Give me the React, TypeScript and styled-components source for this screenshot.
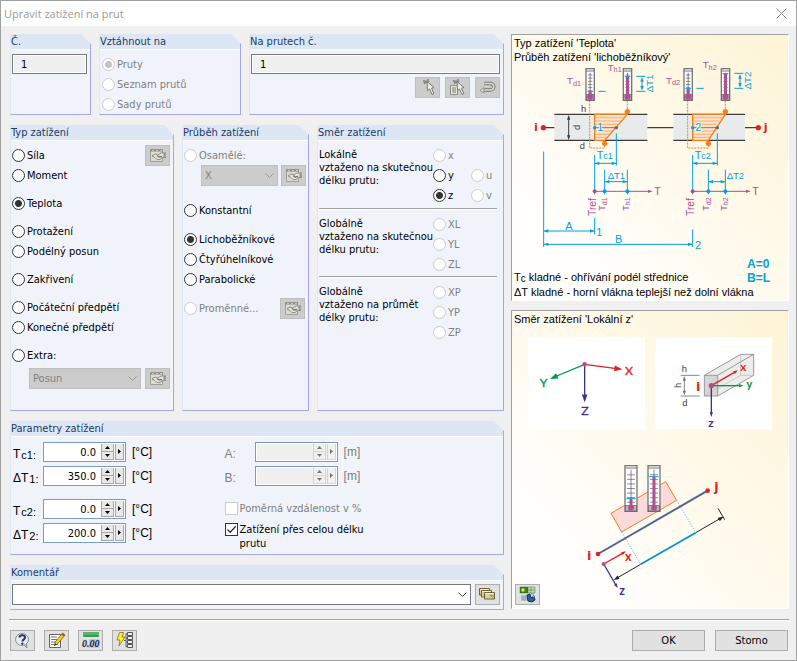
import React, { useId } from "react";
import styled, { createGlobalStyle } from "styled-components";

const UI = `"DejaVu Sans Condensed", "DejaVu Sans", sans-serif`;
const ARIAL = `"Liberation Sans", Arial, sans-serif`;
const BLUE = "#00a0e0";
const PURPLE = "#b0508f";
const ORANGE = "#f08020";
const DARK = "#3c3c3c";
const RED = "#e31e24";
const NAVY = "#3b3488";
const GREEN = "#009a4b";

const GlobalStyle = createGlobalStyle`
  *, *::before, *::after { box-sizing: border-box; }
  body { margin: 0; background: #f0f0f0; font: 11px/13px ${UI}; color: #000; }
  button, input, select { font: inherit; color: inherit; margin: 0; padding: 0; border-radius: 0; }
`;

const Dialog = styled.main`
  display: flex;
  flex-direction: column;
  min-height: 100vh;
  border: 1px solid #a0a0a0;
  background: #f0f0f0;
`;
const TitleBar = styled.header`
  display: flex;
  align-items: center;
  justify-content: space-between;
  height: 25px;
  padding: 0 9px 0 3px;
  background: #fff;
`;
const Title = styled.h1`
  margin: 0;
  font: 11px/16px "Open Sans", sans-serif;
  color: #999;
`;
const CloseButton = styled.button`
  display: flex;
  border: 0;
  background: none;
`;
const Content = styled.div`
  display: grid;
  grid-template-columns: 494fr 278fr;
  gap: 7px;
  padding: 8px 7px 9px 9px;
`;
const Form = styled.form`
  display: flex;
  flex-direction: column;
  gap: 10px;
  min-width: 0;
`;
const GroupRow = styled.div<{ $cols: string }>`
  display: grid;
  grid-template-columns: ${(p) => p.$cols};
  gap: 8px;
`;
const GroupBox = styled.fieldset`
  display: flex;
  flex-direction: column;
  min-width: 0;
  margin: 0;
  padding: 0;
  border: solid #a6a6ea;
  border-width: 0 1px 1px 0;
  background: #f0f4fa;
  clip-path: polygon(0 0, calc(100% - 10px) 0, 100% 10px, 100% 100%, 0 100%);
  border-left: 1px solid #e0e8f8;
`;
const GroupTitle = styled.legend`
  float: left;
  width: 100%;
  height: 16px;
  padding: 0;
  border-bottom: 1px solid #fff;
  background: #dce6f4;
  color: #1c3c64;
  line-height: 16px;
`;
const GroupBody = styled.div<{ $pad: string }>`
  clear: both;
  padding: ${(p) => p.$pad};
`;
const TextField = styled.input`
  display: block;
  width: 100%;
  height: 20px;
  padding: 0 8px;
  border: 1px solid #7a7a7a;
  outline: 1px solid #fff;
  outline-offset: -2px;
  background: #f0f0f0;
`;
const OptionLabel = styled.label<{ $off?: boolean }>`
  display: flex;
  align-items: center;
  gap: 2px;
  height: 20px;
  white-space: nowrap;
  color: ${(p) => (p.$off ? "#808080" : "#000")};
`;
const RadioInput = styled.input`
  appearance: none;
  flex: none;
  width: 13px;
  height: 13px;
  border: 1px solid #333;
  border-radius: 50%;
  background: #fff;
  &:checked { background: radial-gradient(circle, #333 0 3px, #fff 4px); }
  &:disabled { border-color: #ccc; }
  &:disabled:checked { background: radial-gradient(circle, #c4c4c4 0 3px, #fff 4px); }
`;
const CheckInput = styled.input`
  appearance: none;
  flex: none;
  width: 13px;
  height: 13px;
  border: 1px solid #333;
  background: #fff;
  &:checked { background: #fff url('data:image/svg+xml,<svg xmlns="http://www.w3.org/2000/svg" viewBox="0 0 11 11"><path d="M1.5 5.5 4.2 8.2 9.7 2.2" fill="none" stroke="%23333" stroke-width="1.3"/></svg>'); }
  &:disabled { border-color: #ccc; }
`;
const CheckLabel = styled.label<{ $off?: boolean }>`
  display: flex;
  align-items: flex-start;
  gap: 2px;
  max-width: 150px;
  line-height: 14px;
  color: ${(p) => (p.$off ? "#808080" : "#000")};
`;
const Stack = styled.div<{ $gap?: number }>`
  display: flex;
  flex-direction: column;
  gap: ${(p) => p.$gap ?? 0}px;
`;
const Split = styled.div`
  display: flex;
  justify-content: space-between;
  align-items: flex-start;
`;
const IconButton = styled.button`
  display: flex;
  flex: none;
  align-items: center;
  justify-content: center;
  width: 25px;
  height: 21px;
  border: 1px solid #adadad;
  background: #e1e1e1;
  &:disabled { border-color: #bfbfbf; background: #ccc; }
`;
const ToolRow = styled.div`
  display: flex;
  justify-content: flex-end;
  gap: 5px;
  margin-top: 3px;
`;
const ComboRow = styled.div<{ $gap: number }>`
  display: flex;
  gap: ${(p) => p.$gap}px;
  padding-left: 17px;
`;
const ComboWrap = styled.div`
  position: relative;
  display: flex;
  flex: 1;
  min-width: 0;
`;
const Combo = styled.select`
  appearance: none;
  width: 100%;
  height: 21px;
  padding: 0 3px;
  border: 1px solid #7a7a7a;
  background: #fff;
  &:disabled { border-color: #bfbfbf; background: #ccc; color: #808080; opacity: 1; }
`;
const ComboArrow = styled.svg`
  position: absolute;
  right: 4px;
  top: 7px;
  pointer-events: none;
`;
const DirectionBlock = styled.section`
  display: grid;
  grid-template-columns: 114px 38px 1fr;
  padding-bottom: 3px;
  & + & {
    border-top: 1px solid #a0a0a0;
    box-shadow: inset 0 1px #fff;
    padding-top: 5px;
    padding-bottom: 2px;
  }
`;
const DirectionText = styled.p`
  margin: 3px 0 0;
  white-space: nowrap;
`;
const RadioColumn = styled.div<{ $top?: number }>`
  display: flex;
  flex-direction: column;
  padding-top: ${(p) => p.$top ?? 0}px;
`;
const Params = styled.div`
  display: grid;
  grid-template-columns: 212fr 278fr;
`;
const ParamRow = styled.div<{ $off?: boolean }>`
  display: grid;
  grid-template-columns: 30px 83px 1fr;
  align-items: center;
  color: ${(p) => (p.$off ? "#808080" : "#000")};
`;
const ParamLabel = styled.label`
  font: 12px/16px ${ARIAL};
  padding-top: 3px;
  small { font-size: 11px; position: relative; top: 1px; margin-left: 1px; }
`;
const Unit = styled.span`
  padding-left: 6px;
  font: 12px/16px ${ARIAL};
`;
const NumberBox = styled.div<{ $off?: boolean }>`
  display: flex;
  gap: 1px;
  height: 20px;
  padding: 1px;
  border: 1px solid #7b9cbf;
  background: ${(p) => (p.$off ? "#f0f0f0" : "#fff")};
  outline: 1px solid #fff;
  outline-offset: -2px;
`;
const NumberInput = styled.input`
  flex: 1;
  width: 20px;
  padding-right: 4px;
  border: 0;
  background: transparent;
  text-align: right;
`;
const Steps = styled.div`
  display: flex;
  flex-direction: column;
  width: 13px;
`;
const StepButton = styled.button<{ $wide?: boolean }>`
  display: flex;
  flex: 1;
  align-items: center;
  justify-content: center;
  max-width: ${(p) => (p.$wide ? "9px" : "none")};
  min-width: 9px;
  border: solid #a8a8a8;
  border-width: 0 1px 1px 1px;
  background: #e8e8e8;
  &:disabled { border-color: #d4d4d4; background: #f0f0f0; }
`;
const CommentRow = styled.div`
  display: flex;
  gap: 4px;
  align-items: center;
`;
const Side = styled.aside`
  display: flex;
  flex-direction: column;
  gap: 9px;
  min-width: 0;
`;
const Figure = styled.figure`
  position: relative;
  margin: 0;
  border: 1px solid;
  border-color: #a0a0a0 #fff #fff #a0a0a0;
  background: linear-gradient(to top right, #fff 0%, #fffdf8 30%, #fff9e8 60%, #fdf4d6 100%);
  font: 11px/14px ${ARIAL};
`;
const Caption = styled.figcaption`
  padding: 1px 2px 0;
`;
const Drawing = styled.svg`
  display: block;
  width: 100%;
  height: auto;
  overflow: visible;
`;
const Notes = styled.div`
  display: flex;
  justify-content: space-between;
  padding: 0 18px 0 2px;
`;
const NoteText = styled.p`
  margin: 13px 0 0;
  width: 0;
  flex: 1;
  white-space: nowrap;
  line-height: 15px;
  small { font-size: 10px; position: relative; top: 1px; }
`;
const NoteValues = styled.p`
  margin: 0;
  font-size: 12px;
  font-weight: bold;
  color: ${BLUE};
`;
const PictureButton = styled(IconButton)`
  position: absolute;
  left: 3px;
  bottom: 3px;
`;
const Footer = styled.footer`
  display: flex;
  align-items: center;
  justify-content: space-between;
  margin: 0 7px 0 8px;
  padding: 10px 1px 9px;
  border-top: 1px solid #a0a0a0;
  box-shadow: inset 0 1px #fff;
`;
const FooterGroup = styled.div<{ $gap: number }>`
  display: flex;
  gap: ${(p) => p.$gap}px;
`;
const PushButton = styled.button`
  width: 73px;
  height: 21px;
  border: 1px solid #adadad;
  background: #e1e1e1;
`;

const EditIcon = () => (
  <svg width="17" height="15" viewBox="0 0 17 15">
    <path d="M1.500 1.500h12v12h-12z" fill="#dadad2" stroke="#a0a09a" />
    <path d="M1 2.500h13" stroke="#8c8c86" strokeWidth="2" />
    <path d="M3 2.500h2M7 2.500h2M11 2.500h2" stroke="#c8c8c0" />
    <path d="M3 8l3-2 3 1 3-2h5v4.500h-3.500L11 11.500H8L6 9.500z" fill="#e6e6dc" stroke="#85857e" strokeWidth=".9" />
    <path d="M8 7.500l2 1.500 3-.5" stroke="#77776f" strokeWidth="1.300" fill="none" />
    <path d="M15.500 5v5" stroke="#92928a" strokeWidth="2" />
  </svg>
);
const ArrowCursor = ({ list }: { list?: boolean }) => (
  <svg width="18" height="17" viewBox="0 0 18 17">
    {list && <path d="M1.500 6.500h7v9h-7z" fill="#e8e8dc" stroke="#8c8c84" />}
    {list && <path d="M3 9h4M3 11h4M3 13h4" stroke="#77776f" />}
    <path d="M4 2l6 1M9 0v4M5 4.500l3-2" stroke="#8a8a84" strokeWidth="1.800" />
    <path d="M8 2.500 8.500 11.500l2-1.500 2.500 5.500 2-1-2.500-5.300 2.500-.7z" fill="#eeeee6" stroke="#77776f" />
  </svg>
);
const UndoIcon = () => (
  <svg width="17" height="13" viewBox="0 0 17 13">
    <path d="M5 2.500h6.500a3 3 0 0 1 0 6.500H4" stroke="#77776f" strokeWidth="3.500" fill="none" />
    <path d="M5 2.500h6.500a3 3 0 0 1 0 6.500H4" stroke="#dadad0" strokeWidth="1.600" fill="none" />
    <path d="M1 9.500 5 6.500v5.500z" fill="#dadad0" stroke="#88887f" strokeWidth=".8" />
  </svg>
);
const CardsIcon = () => (
  <svg width="17" height="13" viewBox="0 0 17 13">
    {[0, 2, 5].map((d, i) => (
      <g key={d} transform={`translate(${d} ${i * 2})`}>
        <path d="M.5.5h10v6.500H.5z" fill="#d8cfa0" stroke="#6e6234" />
        <path d="M1 1.500h9" stroke="#f5f0d0" />
      </g>
    ))}
    <path d="M11 7.500l3 2v-2z" fill="#fff" stroke="#6e6234" strokeWidth=".6" />
  </svg>
);
const PictureIcon = () => (
  <svg width="18" height="17" viewBox="0 0 18 17">
    <path d="M1 1h8v6H1z" fill="#2e8b30" />
    <path d="M9 1h7v6H9z" fill="#b9dfb0" />
    <path d="M1 1h15v6H1zM1 4h15M5 1v6M9 1v6M12 1v6" stroke="#1d4d22" strokeWidth=".6" fill="none" opacity=".6" />
    <circle cx="4" cy="4" r="1.800" fill="#f4e53a" />
    <path d="M2 9h8v6H2z" fill="#c3ccd6" />
    <path d="M2 11h8M2 13h8M4 9v6M6 9v6" stroke="#8c98a8" strokeWidth=".7" />
    <path d="M8 9l3-1 1 4 3-2 1 4-3 2-4-1z" fill="#2e5f9e" stroke="#16304f" />
    <path d="M12 7l2 1 1 3" stroke="#7ba4d4" strokeWidth="1.500" fill="none" />
  </svg>
);
const HelpIcon = () => (
  <svg width="17" height="17" viewBox="0 0 17 17">
    <ellipse cx="8" cy="7.500" rx="6.500" ry="6" fill="#e8ebef" stroke="#8590a0" />
    <path d="M10 13l3 3-.5-4" fill="#c8ced6" stroke="#8590a0" />
    <path d="M5.500 5.500c0-3 5.500-3 5.500 0 0 2-2.500 1.800-2.500 4" stroke="#2c3566" strokeWidth="2" fill="none" />
    <circle cx="8.300" cy="11.600" r="1.200" fill="#2c3566" />
  </svg>
);
const NoteIcon = () => (
  <svg width="18" height="17" viewBox="0 0 18 17">
    <path d="M1.500 2.500h11v13h-11z" fill="#fff" stroke="#666" />
    <path d="M3 5h6M3 7.500h6M3 10h4M3 12.500h7" stroke="#777" />
    <path d="M14.500 1 17 3 9.500 12l-3 1.500.7-3.500z" fill="#f3d320" stroke="#6b5710" strokeWidth=".8" />
    <path d="M14.500 1 17 3 15.800 4.500 13.200 2.500z" fill="#c04a3a" />
    <path d="M6.500 13.500l1.800-.9-1.100-1z" fill="#222" />
  </svg>
);
const UnitsIcon = () => (
  <svg width="18" height="17" viewBox="0 0 18 17">
    <path d="M1 0h16v5H1z" fill="#55b56c" />
    <path d="M3 3v2M5 3v2M7 3v2M9 3v2M11 3v2M13 3v2M15 3v2" stroke="#1f6b35" strokeWidth=".8" />
    <path d="M7 7h10v9H7z" fill="#b9cdea" />
    <text x="0" y="15" fontFamily="Liberation Serif" fontStyle="italic" fontWeight="bold" fontSize="10" fill="#1c2440">0.00</text>
  </svg>
);
const TreeIcon = () => (
  <svg width="18" height="17" viewBox="0 0 18 17">
    <path d="M3.500.5h4L6 5h3L3 14l1-6H1z" fill="#fdee2a" stroke="#8a7a10" strokeWidth=".8" />
    <path d="M8 8.500h2M10 1.500v13.500M10 2H12M10 6H12M10 10H12M10 14.500H12" stroke="#666" fill="none" />
    {[0, 4, 8, 12].map((y) => (
      <path key={y} d={`M11.500 ${y}.5h5v3h-5z`} fill="#eee" stroke="#555" />
    ))}
  </svg>
);

type RadioProps = { name: string; text: string; on?: boolean; off?: boolean };
const Radio = ({ name, text, on, off }: RadioProps) => (
  <OptionLabel $off={off}>
    <RadioInput type="radio" name={name} defaultChecked={on} disabled={off} />
    {text}
  </OptionLabel>
);

type SelectProps = { label: string; options: string[]; off?: boolean };
const Select = ({ label, options, off }: SelectProps) => (
  <ComboWrap>
    <Combo aria-label={label} disabled={off}>
      {options.map((o) => (
        <option key={o}>{o}</option>
      ))}
    </Combo>
    <ComboArrow width="9" height="7" viewBox="0 0 9 7">
      <path d="M.5 1.500l4 4 4-4" fill="none" stroke={off ? "#999" : "#444"} />
    </ComboArrow>
  </ComboWrap>
);

const Triangle = ({ d, off }: { d: string; off?: boolean }) => (
  <svg width="5" height="5" viewBox="0 0 5 5">
    <path d={d} fill={off ? "#777" : "#000"} />
  </svg>
);

type NumberProps = { label: React.ReactNode; value?: string; unit: string; off?: boolean };
const NumberField = ({ label, value = "", unit, off }: NumberProps) => {
  const id = useId();
  return (
    <ParamRow $off={off}>
      <ParamLabel htmlFor={id}>{label}</ParamLabel>
      <NumberBox $off={off}>
        <NumberInput id={id} defaultValue={value} disabled={off} />
        <Steps>
          <StepButton type="button" aria-label="+" disabled={off}>
            <Triangle d="M0 4 2.500 1 5 4z" off={off} />
          </StepButton>
          <StepButton type="button" aria-label="-" disabled={off}>
            <Triangle d="M0 1 2.500 4 5 1z" off={off} />
          </StepButton>
        </Steps>
        <StepButton type="button" aria-label=">" $wide disabled={off}>
          <Triangle d="M1 0 4 2.500 1 5z" off={off} />
        </StepButton>
      </NumberBox>
      <Unit>{unit}</Unit>
    </ParamRow>
  );
};

/* Drawings use three units per pixel. */
const Arrow = ({ x, y, a, c, s = 1 }: { x: number; y: number; a: number; c: string; s?: number }) => (
  <path d="M0 0-14-5V5z" fill={c} transform={`translate(${x} ${y}) rotate(${a}) scale(${s})`} />
);
const Span = ({ x1, x2, y }: { x1: number; x2: number; y: number }) => (
  <g>
    <path d={`M${x1} ${y}H${x2}`} stroke={BLUE} strokeWidth="3" />
    <Arrow x={x1} y={y} a={180} c={BLUE} />
    <Arrow x={x2} y={y} a={0} c={BLUE} />
  </g>
);
type ThermoProps = { x: number; y: number; w: number; h: number; level: number };
const Thermometer = ({ x, y, w, h, level }: ThermoProps) => {
  const cx = x + w / 2;
  const step = h / 10;
  return (
    <g>
      <rect x={x} y={y} width={w} height={h} fill="#fff" stroke="#77777d" strokeWidth="4" />
      <path d={`M${x} ${y + 7}h${w}`} stroke="#77777d" strokeWidth="3" />
      <path d={`M${cx} ${y + 12}V${y + h - 14}`} stroke="#888" strokeWidth="3" />
      {[2, 3, 4, 5, 6, 7, 8].map((n) => (
        <path key={n} d={`M${x + 6} ${y + n * step}h${w - 12}`} stroke="#55555a" strokeWidth="2" />
      ))}
      <rect x={x + 1} y={y + h - 17} width={w - 2} height="16" fill="#bbb" stroke="#55555a" strokeWidth="2" />
      <path d={`M${cx} ${y + level}V${y + h - 10}`} stroke={PURPLE} strokeWidth="9" />
      <circle cx={cx} cy={y + h - 11} r="9" fill={PURPLE} />
      <path d={`M${x + 4} ${y + level}h${w - 8}`} stroke={BLUE} strokeWidth="3" />
    </g>
  );
};

type SectionProps = { x: number; n: number; low: number; mid: number; high: number; dLevel: number; hLevel: number };
const Section = ({ x, n, low, mid, high, dLevel, hLevel }: SectionProps) => (
  <g>
    <path d={`M${x - 15} 242V384H${low}V368M${high} 242V275`} fill="none" stroke={ORANGE} strokeWidth="3" strokeDasharray="6 3" />
    <path d={`M${x} 283H${high}L${low} 361H${x}z`} fill="#fde3ca" stroke={ORANGE} strokeWidth="4" />
    <path d={`M${x} 293H${high - 8}M${x} 303H${high - 17}M${x} 313H${high - 26}M${x} 333H${low + 25}M${x} 343H${low + 16}M${x} 352H${low + 7}`} stroke={ORANGE} strokeWidth="2" opacity=".75" />
    <path d={`M${x} 323H${mid}`} stroke="#777" strokeWidth="3" />
    <circle cx={high} cy="275" r="8" fill={ORANGE} />
    <circle cx={low} cy="370" r="8" fill={ORANGE} />
    <circle cx={mid} cy="323" r="5" fill="#666" />
    <circle cx={x} cy="323" r="5" fill={BLUE} />
    <text x={x + 8} y="334" fontSize="32" fill={BLUE} stroke="#fdeede" strokeWidth="6" paintOrder="stroke">{n}</text>
    <Thermometer x={x - 26} y={146} w={25} h={95} level={dLevel} />
    <Thermometer x={high - 12} y={146} w={25} h={95} level={hLevel} />
    <path d={`M${x} 405V523M${mid} 340V437M${low} 449V523M${high} 449V523`} stroke={BLUE} strokeWidth="3" />
    <Span x1={x} x2={mid} y={430} />
    <text x={x + 6} y="418" fontSize="32" fill={BLUE}>T<tspan fontSize="27">c{n}</tspan></text>
    <Span x1={low} x2={high} y={485} />
    <path d={`M${x} 514H${x + 165}`} stroke={PURPLE} strokeWidth="3" />
    <Arrow x={x + 174} y={514} a={0} c={PURPLE} />
    <circle cx={x} cy="514" r="6" fill={PURPLE} />
    <circle cx={low} cy="514" r="6" fill={BLUE} />
    <circle cx={high} cy="514" r="6" fill={BLUE} />
    <text x={x + 179} y="526" fontSize="32" fill={PURPLE}>T</text>
    <g fill={PURPLE}>
      <text transform={`translate(${x + 4} 588) rotate(-90)`} fontSize="31">Tref</text>
      <text transform={`translate(${low + 2} 572) rotate(-90)`} fontSize="27">T<tspan fontSize="21" dy="5">d{n}</tspan></text>
      <text transform={`translate(${high + 4} 572) rotate(-90)`} fontSize="27">T<tspan fontSize="21" dy="5">h{n}</tspan></text>
    </g>
  </g>
);

const LoadDrawing = () => (
  <Drawing viewBox="21 132 828 579" fontFamily="Liberation Sans">
    <path d="M148 283H427V361H148zM505 283H720V361H505z" fill="#e9eaec" />
    <path d="M148 283H427M148 361H427M505 283H720M505 361H720M115 323H148M427 323H505M720 323H760" stroke={DARK} strokeWidth="4" />
    <circle cx="115" cy="323" r="8" fill={RED} />
    <circle cx="760" cy="323" r="8" fill={RED} />
    <g fill={RED} fontSize="34" fontWeight="bold" fontFamily="DejaVu Sans">
      <text x="87" y="334">i</text>
      <text x="776" y="334">j</text>
    </g>
    <path d="M191 290V355" stroke={DARK} strokeWidth="3" />
    <Arrow x={191} y={285} a={-90} c={DARK} />
    <Arrow x={191} y={360} a={90} c={DARK} />
    <g fill={DARK} fontSize="28">
      <text x="228" y="276">h</text>
      <text x="224" y="387">d</text>
      <text transform="translate(225 330) rotate(-90)">d</text>
    </g>
    <Section x={269} n={1} low={299} mid={334} high={367} dLevel={68} hLevel={23} />
    <Section x={563} n={2} low={610} mid={637} high={661} dLevel={60} hLevel={15} />
    <g fill={PURPLE} fontSize="29">
      <text x="186" y="193">T<tspan fontSize="22" dy="5">d1</tspan></text>
      <text x="308" y="152">T<tspan fontSize="22" dy="5">h1</tspan></text>
      <text x="483" y="191">T<tspan fontSize="22" dy="5">d2</tspan></text>
      <text x="593" y="145">T<tspan fontSize="22" dy="5">h2</tspan></text>
    </g>
    <path d="M280 214h22M574 205h22M394 169h27M394 214h27M688 160h27M688 205h27" stroke={BLUE} strokeWidth="3" />
    <path d="M411 178V206M705 169V197" stroke={BLUE} strokeWidth="3" />
    <Arrow x={411} y={171} a={-90} c={BLUE} />
    <Arrow x={411} y={212} a={90} c={BLUE} />
    <Arrow x={705} y={162} a={-90} c={BLUE} />
    <Arrow x={705} y={203} a={90} c={BLUE} />
    <g fill={BLUE} fontSize="29">
      <text transform="translate(445 217) rotate(-90)">ΔT1</text>
      <text transform="translate(739 208) rotate(-90)">ΔT2</text>
      <text x="308" y="477">ΔT<tspan fontSize="26">1</tspan></text>
      <text x="665" y="477">ΔT<tspan fontSize="26">2</tspan></text>
    </g>
    <g fill={BLUE} fontSize="33">
      <text x="181" y="630">A</text>
      <text x="330" y="668">B</text>
      <text x="274" y="647">1</text>
      <text x="570" y="687">2</text>
    </g>
    <path d="M116 395V681M269 594V643M563 628V681" stroke={BLUE} strokeWidth="3" />
    <Span x1={116} x2={269} y={633} />
    <Span x1={116} x2={563} y={673} />
  </Drawing>
);

const DirectionDrawing = () => (
  <Drawing viewBox="21 3 828 846" fontFamily="Liberation Sans">
    <path d="M70 37H420V313H70zM451 37H801V313H451z" fill="#fff" />
    <g strokeWidth="4">
      <path d="M239 118 335 131" stroke={RED} />
      <path d="M239 118 155 153" stroke={GREEN} />
      <path d="M239 118V212" stroke={NAVY} />
    </g>
    <Arrow x={352} y={133} a={7} c={RED} s={1.7} />
    <Arrow x={135} y={162} a={157} c={GREEN} s={1.7} />
    <Arrow x={239} y={232} a={90} c={NAVY} s={1.7} />
    <circle cx="239" cy="118" r="7" fill={PURPLE} />
    <g fontSize="37" fontFamily="Lato" strokeWidth="1">
      <text x="360" y="149" fill={RED} stroke={RED}>X</text>
      <text x="104" y="185" fill={GREEN} stroke={GREEN}>Y</text>
      <text x="229" y="269" fill={NAVY} stroke={NAVY}>Z</text>
    </g>

    <path d="M598 151 707 88H746V151L638 213H598z" fill="#ececec" />
    <path d="M598 151H638V213H598z" fill="#d6d6d6" />
    <path d="M598 213 707 151H746M707 88V151" fill="none" stroke="#bbb" strokeWidth="2" />
    <path d="M598 151 707 88H746V151L638 213H598zM598 151H638L746 88M638 151V213" fill="none" stroke="#999" strokeWidth="3" />
    <path d="M527 151H584M527 213H584M538 160V204" stroke="#888" strokeWidth="3" />
    <Arrow x={538} y={153} a={-90} c="#777" />
    <Arrow x={538} y={211} a={90} c="#777" />
    <g fill={DARK} fontSize="28">
      <text x="530" y="141">h</text>
      <text x="532" y="243">d</text>
      <text transform="translate(527 189) rotate(-90)">h</text>
    </g>
    <g strokeWidth="4">
      <path d="M619 182 688 142" stroke={RED} />
      <path d="M619 182H704" stroke={GREEN} />
      <path d="M619 182V264" stroke={NAVY} />
    </g>
    <Arrow x={699} y={136} a={-30} c={RED} />
    <Arrow x={716} y={182} a={0} c={GREEN} />
    <Arrow x={619} y={276} a={90} c={NAVY} />
    <circle cx="619" cy="182" r="8" fill={PURPLE} />
    <g fontFamily="Lato" fontWeight="bold" fontSize="35">
      <text x="706" y="138" fill={RED}>x</text>
      <text x="724" y="189" fill={GREEN}>y</text>
      <text x="610" y="305" fill={NAVY}>z</text>
    </g>
    <g fill={RED} fontFamily="DejaVu Sans" fontWeight="bold">
      <text x="573" y="198" fontSize="38">i</text>
      <text x="246" y="706" fontSize="38">i</text>
      <text x="628" y="499" fontSize="38">j</text>
    </g>

    <path d="M318 565 482 470 515 526 350 621z" fill="#fadada" stroke={ORANGE} strokeWidth="3" />
    <path d="M350 621 407 718M515 526 572 623" stroke="#6cc5e8" strokeWidth="3" strokeDasharray="4 4" />
    <path d="M279 687 608 497" stroke="#53658f" strokeWidth="6" />
    <circle cx="279" cy="687" r="7" fill={RED} />
    <circle cx="608" cy="497" r="7" fill={RED} />
    <Thermometer x={360} y={422} w={36} h={137} level={99} />
    <Thermometer x={429} y={422} w={36} h={137} level={33} />
    <path d="M407 718 336 759M572 623 645 581M639 550 659 584" stroke="#222" strokeWidth="3" />
    <path d="M407 718 572 623" stroke="#0092d0" strokeWidth="5" />
    <Arrow x={326} y={765} a={150} c="#222" s={1.2} />
    <Arrow x={656} y={575} a={-30} c="#222" s={1.2} />
    <path d="M296 717 352 685" stroke={RED} strokeWidth="4" />
    <path d="M296 717 331 777" stroke={NAVY} strokeWidth="4" />
    <Arrow x={363} y={679} a={-30} c={RED} />
    <Arrow x={338} y={789} a={60} c={NAVY} />
    <circle cx="296" cy="717" r="6" fill={PURPLE} />
    <g fontFamily="Lato" fontWeight="bold" fontSize="37">
      <text x="360" y="707" fill={RED}>x</text>
      <text x="343" y="809" fill={NAVY}>z</text>
    </g>
  </Drawing>
);

export default function App() {
  return (
    <Dialog>
      <GlobalStyle />
      <TitleBar>
        <Title>Upravit zatížení na prut</Title>
        <CloseButton aria-label="Zavřít">
          <svg width="11" height="11" viewBox="0 0 11 11">
            <path d="M.5.5l10 10M10.500.5l-10 10" stroke="#8a8a8a" />
          </svg>
        </CloseButton>
      </TitleBar>
      <Content>
        <Form>
          <GroupRow $cols="81fr 142fr 255fr">
            <GroupBox>
              <GroupTitle>Č.</GroupTitle>
              <GroupBody $pad="4px 3px 0 1px">
                <TextField aria-label="Č." defaultValue="1" readOnly />
              </GroupBody>
            </GroupBox>
            <GroupBox>
              <GroupTitle>Vztáhnout na</GroupTitle>
              <GroupBody $pad="4px 2px 0">
                <Radio name="ref" text="Pruty" on off />
                <Radio name="ref" text="Seznam prutů" off />
                <Radio name="ref" text="Sady prutů" off />
              </GroupBody>
            </GroupBox>
            <GroupBox>
              <GroupTitle>Na prutech č.</GroupTitle>
              <GroupBody $pad="4px 3px 16px 1px">
                <TextField aria-label="Na prutech č." defaultValue="1" readOnly />
                <ToolRow>
                  <IconButton type="button" aria-label="Vybrat" disabled><ArrowCursor /></IconButton>
                  <IconButton type="button" aria-label="Vybrat ze seznamu" disabled><ArrowCursor list /></IconButton>
                  <IconButton type="button" aria-label="Zpět" disabled><UndoIcon /></IconButton>
                </ToolRow>
              </GroupBody>
            </GroupBox>
          </GroupRow>

          <GroupRow $cols="164fr 127fr 187fr">
            <GroupBox>
              <GroupTitle>Typ zatížení</GroupTitle>
              <GroupBody $pad="4px 3px 21px 1px">
                <Stack $gap={8}>
                  <Split>
                    <Stack>
                      <Radio name="type" text="Síla" />
                      <Radio name="type" text="Moment" />
                    </Stack>
                    <IconButton type="button" aria-label="Upravit sílu" disabled><EditIcon /></IconButton>
                  </Split>
                  <Radio name="type" text="Teplota" on />
                  <Stack>
                    <Radio name="type" text="Protažení" />
                    <Radio name="type" text="Podélný posun" />
                  </Stack>
                  <Radio name="type" text="Zakřivení" />
                  <Stack>
                    <Radio name="type" text="Počáteční předpětí" />
                    <Radio name="type" text="Konečné předpětí" />
                  </Stack>
                  <Stack $gap={3}>
                    <Radio name="type" text="Extra:" />
                    <ComboRow $gap={4}>
                      <Select label="Extra" options={["Posun"]} off />
                      <IconButton type="button" aria-label="Upravit extra" disabled><EditIcon /></IconButton>
                    </ComboRow>
                  </Stack>
                </Stack>
              </GroupBody>
            </GroupBox>
            <GroupBox>
              <GroupTitle>Průběh zatížení</GroupTitle>
              <GroupBody $pad="4px 2px 0 1px">
                <Stack>
                  <Radio name="dist" text="Osamělé:" off />
                  <ComboRow $gap={3}>
                    <Select label="Osamělé" options={["X"]} off />
                    <IconButton type="button" aria-label="Upravit osamělé" disabled><EditIcon /></IconButton>
                  </ComboRow>
                </Stack>
              </GroupBody>
              <GroupBody $pad="14px 3px 0 1px">
                <Stack $gap={9}>
                  <Radio name="dist" text="Konstantní" />
                  <Stack>
                    <Radio name="dist" text="Lichoběžníkové" on />
                    <Radio name="dist" text="Čtyřúhelníkové" />
                    <Radio name="dist" text="Parabolické" />
                  </Stack>
                  <Split>
                    <Radio name="dist" text="Proměnné..." off />
                    <IconButton type="button" aria-label="Upravit proměnné" disabled><EditIcon /></IconButton>
                  </Split>
                </Stack>
              </GroupBody>
            </GroupBox>
            <GroupBox>
              <GroupTitle>Směr zatížení</GroupTitle>
              <GroupBody $pad="4px 6px 0 1px">
                <DirectionBlock>
                  <DirectionText>Lokálně<br />vztaženo na skutečnou<br />délku prutu:</DirectionText>
                  <RadioColumn>
                    <Radio name="dir" text="x" off />
                    <Radio name="dir" text="y" />
                    <Radio name="dir" text="z" on />
                  </RadioColumn>
                  <RadioColumn $top={20}>
                    <Radio name="dir" text="u" off />
                    <Radio name="dir" text="v" off />
                  </RadioColumn>
                </DirectionBlock>
                <DirectionBlock>
                  <DirectionText>Globálně<br />vztaženo na skutečnou<br />délku prutu:</DirectionText>
                  <RadioColumn>
                    <Radio name="dir" text="XL" off />
                    <Radio name="dir" text="YL" off />
                    <Radio name="dir" text="ZL" off />
                  </RadioColumn>
                </DirectionBlock>
                <DirectionBlock>
                  <DirectionText>Globálně<br />vztaženo na průmět<br />délky prutu:</DirectionText>
                  <RadioColumn>
                    <Radio name="dir" text="XP" off />
                    <Radio name="dir" text="YP" off />
                    <Radio name="dir" text="ZP" off />
                  </RadioColumn>
                </DirectionBlock>
              </GroupBody>
            </GroupBox>
          </GroupRow>

          <GroupBox>
            <GroupTitle>Parametry zatížení</GroupTitle>
            <GroupBody $pad="5px 1px 3px 2px">
              <Params>
                <Stack $gap={13}>
                  <Stack $gap={4}>
                    <NumberField label={<>T<small>c1:</small></>} value="0.0" unit="[°C]" />
                    <NumberField label={<>ΔT<small>1:</small></>} value="350.0" unit="[°C]" />
                  </Stack>
                  <Stack $gap={4}>
                    <NumberField label={<>T<small>c2:</small></>} value="0.0" unit="[°C]" />
                    <NumberField label={<>ΔT<small>2:</small></>} value="200.0" unit="[°C]" />
                  </Stack>
                </Stack>
                <Stack $gap={16}>
                  <Stack $gap={4}>
                    <NumberField label="A:" unit="[m]" off />
                    <NumberField label="B:" unit="[m]" off />
                  </Stack>
                  <Stack $gap={7}>
                    <CheckLabel $off>
                      <CheckInput type="checkbox" disabled />
                      Poměrná vzdálenost v %
                    </CheckLabel>
                    <CheckLabel>
                      <CheckInput type="checkbox" defaultChecked />
                      Zatížení přes celou délku prutu
                    </CheckLabel>
                  </Stack>
                </Stack>
              </Params>
            </GroupBody>
          </GroupBox>

          <GroupBox>
            <GroupTitle>Komentář</GroupTitle>
            <GroupBody $pad="3px 3px 4px 1px">
              <CommentRow>
                <Select label="Komentář" options={[""]} />
                <IconButton type="button" aria-label="Komentáře"><CardsIcon /></IconButton>
              </CommentRow>
            </GroupBody>
          </GroupBox>
        </Form>

        <Side>
          <Figure>
            <Caption>Typ zatížení 'Teplota'<br />Průběh zatížení 'lichoběžníkový'</Caption>
            <LoadDrawing />
            <Notes>
              <NoteText>T<small>c</small> kladné - ohřívání podél střednice<br />ΔT kladné - horní vlákna teplejší než dolní vlákna</NoteText>
              <NoteValues>A=0<br />B=L</NoteValues>
            </Notes>
          </Figure>
          <Figure>
            <Caption>Směr zatížení 'Lokální z'</Caption>
            <DirectionDrawing />
            <PictureButton type="button" aria-label="Obrázek"><PictureIcon /></PictureButton>
          </Figure>
        </Side>
      </Content>
      <Footer>
        <FooterGroup $gap={9}>
          <IconButton type="button" aria-label="Nápověda"><HelpIcon /></IconButton>
          <IconButton type="button" aria-label="Poznámka"><NoteIcon /></IconButton>
          <IconButton type="button" aria-label="Jednotky"><UnitsIcon /></IconButton>
          <IconButton type="button" aria-label="Struktura"><TreeIcon /></IconButton>
        </FooterGroup>
        <FooterGroup $gap={10}>
          <PushButton type="button">OK</PushButton>
          <PushButton type="button">Storno</PushButton>
        </FooterGroup>
      </Footer>
    </Dialog>
  );
}
